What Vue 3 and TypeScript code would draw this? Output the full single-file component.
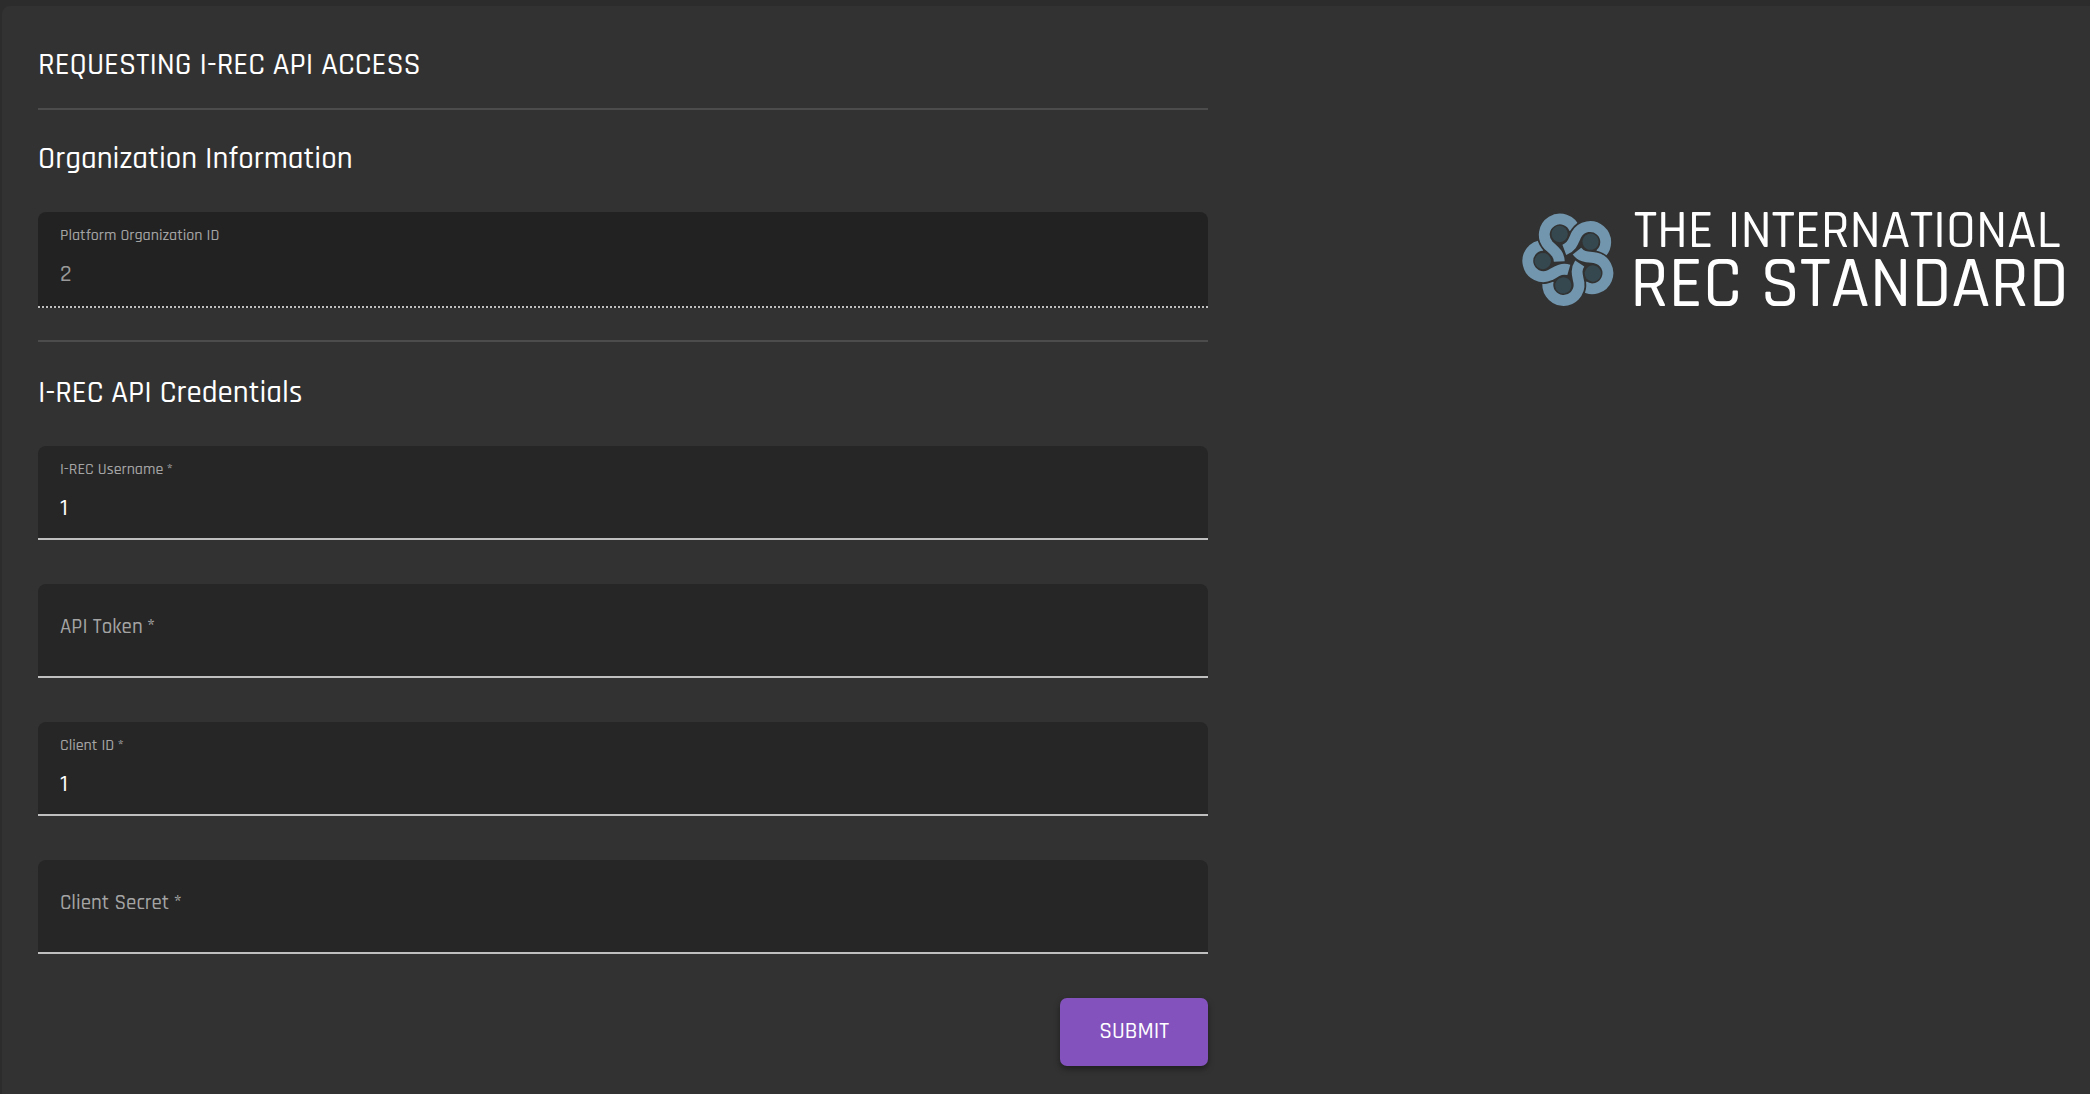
<script setup lang="ts">
import { reactive } from 'vue'

interface Field {
  key: 'username' | 'apiToken' | 'clientId' | 'clientSecret'
  label: string
  type: 'text' | 'password'
}

const organizationId = '2'

const form = reactive<Record<Field['key'], string>>({
  username: '1',
  apiToken: '',
  clientId: '1',
  clientSecret: '',
})

const fields: Field[] = [
  { key: 'username', label: 'I-REC Username', type: 'text' },
  { key: 'apiToken', label: 'API Token', type: 'text' },
  { key: 'clientId', label: 'Client ID', type: 'text' },
  { key: 'clientSecret', label: 'Client Secret', type: 'password' },
]

const petals = [0, 72, 144, 216, 288]
</script>

<template>
  <main class="page">
    <div class="panel">
      <form class="form" @submit.prevent>
        <h1 class="title">REQUESTING I-REC API ACCESS</h1>
        <hr class="divider" />

        <h2 class="title section">Organization Information</h2>
        <div class="field disabled filled">
          <label for="organization">Platform Organization ID</label>
          <input id="organization" type="text" :value="organizationId" disabled />
        </div>
        <hr class="divider spaced" />

        <h2 class="title section">I-REC API Credentials</h2>
        <div class="fields">
          <div v-for="f in fields" :key="f.key" class="field" :class="{ filled: form[f.key] }">
            <label :for="f.key">{{ f.label }}&thinsp;*</label>
            <input :id="f.key" v-model="form[f.key]" :type="f.type" />
          </div>
        </div>

        <button class="submit" type="submit">SUBMIT</button>
      </form>

      <svg class="logo" viewBox="0 0 544 96" role="img" aria-label="The International REC Standard">
        <defs>
          <mask id="petal-cut" maskUnits="userSpaceOnUse" x="0" y="0" width="360" height="360">
            <rect width="360" height="360" fill="#fff" />
            <circle cx="239" cy="126" r="67" fill="#000" />
          </mask>
        </defs>
        <g transform="translate(-14 -14) scale(0.34)">
          <g v-for="angle in petals" :key="angle" :transform="`rotate(${angle} 179 177)`">
            <path
              mask="url(#petal-cut)"
              d="M193 89A46 46 0 1 0 116 136C132 151 147 160 148 184"
              fill="none"
              stroke="#7296ad"
              stroke-width="32"
            />
            <circle cx="149" cy="103" r="24" fill="#35484f" />
          </g>
        </g>
        <text class="logo-text" x="111" y="34" font-size="54">THE INTERNATIONAL</text>
        <text class="logo-text" x="107" y="93" font-size="72">REC STANDARD</text>
      </svg>
    </div>
  </main>
</template>

<style>
body {
  margin: 0;
  background: #2c2c2c;
}
</style>

<style scoped>
.page {
  box-sizing: border-box;
  min-height: 100vh;
  padding: 6px 0 0 2px;
  display: flex;
  font-family: Rajdhani, Roboto, sans-serif;
  font-weight: 500;
  color: #fff;
}

.panel {
  box-sizing: border-box;
  flex: 1;
  display: flex;
  justify-content: space-between;
  align-items: flex-start;
  padding: 38px 24px 28px 36px;
  border-radius: 8px 0 0 0;
  background: #323232;
}

.form {
  width: 57.7%;
  display: flex;
  flex-direction: column;
}

.title {
  margin: 0;
  font-size: 31px;
  line-height: 42px;
  font-weight: 500;
}

.divider {
  width: 100%;
  height: 2px;
  margin: 22px 0 0;
  border: 0;
  background: #4c4c4c;
}

.divider.spaced {
  margin-top: 32px;
}

.section {
  margin: 28px 0 32px;
}

.divider.spaced + .section {
  margin-top: 30px;
}

.fields {
  display: flex;
  flex-direction: column;
  gap: 44px;
}

.field {
  box-sizing: border-box;
  height: 94px;
  display: flex;
  flex-direction: column;
  position: relative;
  border-bottom: 2px solid #bfbfbf;
  border-radius: 8px 8px 0 0;
  background: #262626;
}

.field label {
  position: absolute;
  left: 22px;
  top: 28px;
  font-size: 21px;
  line-height: 30px;
  color: #a4a4a4;
  pointer-events: none;
}

.field.filled label {
  top: 13px;
  font-size: 16px;
  line-height: 22px;
}

.field input {
  box-sizing: border-box;
  flex: 1;
  width: 100%;
  padding: 32px 22px 0;
  border: 0;
  outline: 0;
  background: transparent;
  font: inherit;
  font-size: 24px;
  color: #fff;
}

.field.disabled {
  height: 96px;
  border-bottom-style: dotted;
  background: #222;
}

.field.disabled input {
  padding-top: 30px;
  color: #999;
}

.submit {
  align-self: flex-end;
  width: 148px;
  height: 68px;
  margin-top: 44px;
  padding: 0 0 2px;
  border: 0;
  border-radius: 7px;
  background: #8352bd;
  box-shadow: 0 3px 6px rgba(0, 0, 0, 0.4);
  color: #fff;
  font: inherit;
  font-size: 23px;
  cursor: pointer;
}

.logo {
  width: 26.8%;
  margin-top: 169px;
  overflow: visible;
}

.logo-text {
  fill: #fff;
}
</style>
